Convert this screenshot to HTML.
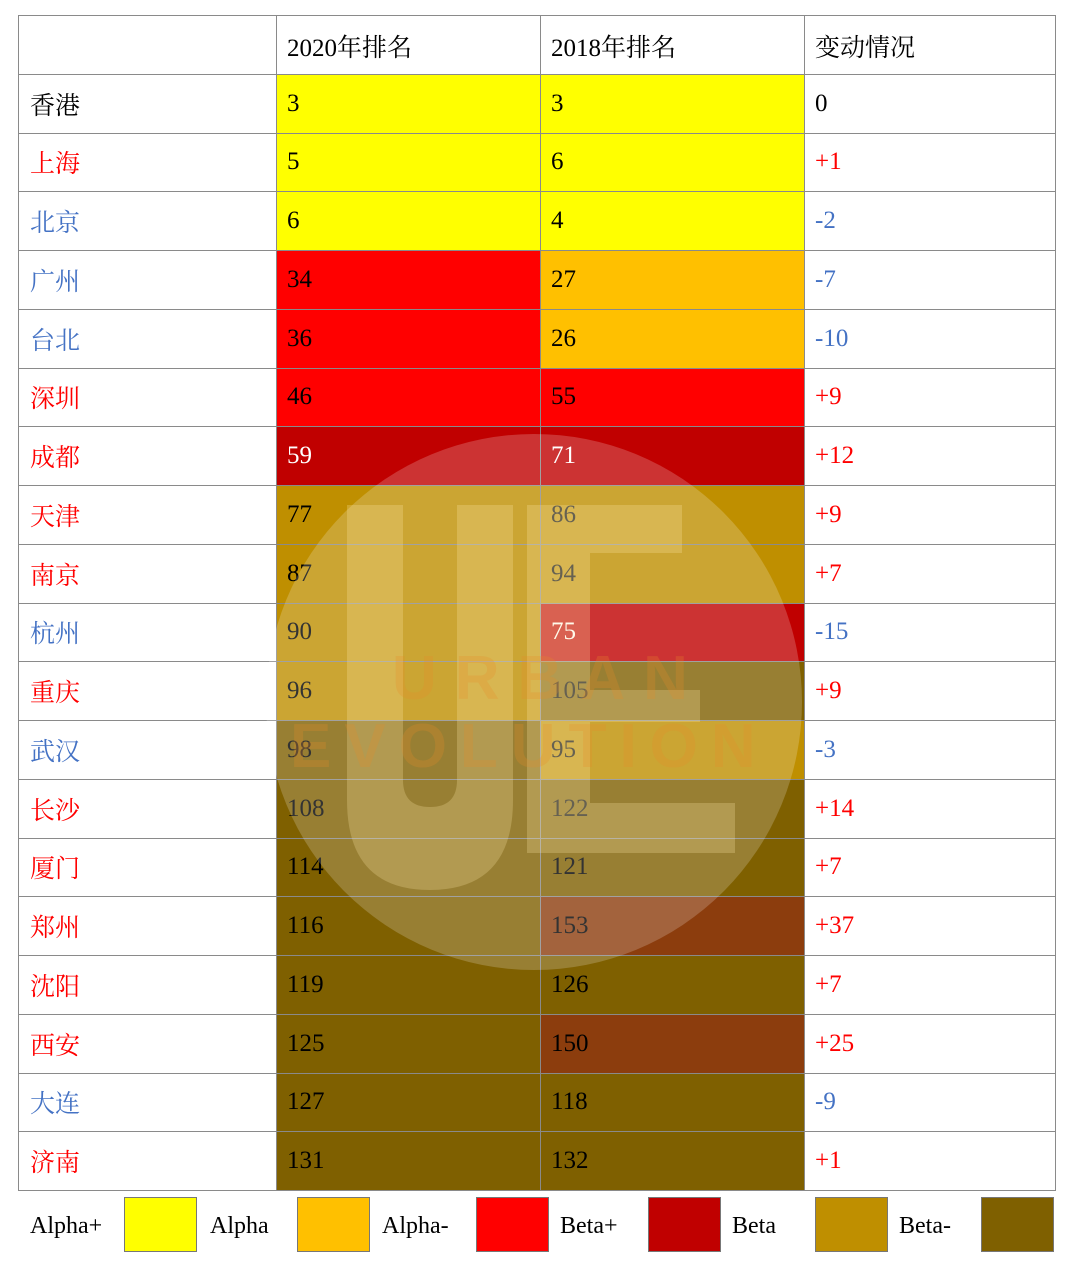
<!DOCTYPE html>
<html><head><meta charset="utf-8"><style>
body{margin:0;background:#fff;width:1068px;height:1286px;position:relative;overflow:hidden;font-family:"Liberation Serif","Noto Serif CJK SC",serif;}
table{position:absolute;left:18px;top:15px;border-collapse:collapse;table-layout:fixed;width:1037px;}
tr{height:58.75px}
td{border:1px solid #8a8a8a;height:57.75px;padding:0 0 0 10px;font-size:25px;color:#000;vertical-align:middle;line-height:24px;overflow:hidden;white-space:nowrap}
tr.h td span{position:relative;top:4px}
td.c{padding-left:11px;font-size:25px}
td.c span{position:relative;top:3px}
.r{color:#f00}.b{color:#4472c4}
.Y{background:#ffff00}.A{background:#ffc000}.R{background:#ff0000}.D{background:#c00000;color:#fff}.G{background:#bf8f00}.B{background:#7f6000}.X{background:#8c3d0d}
.lg{position:absolute;top:1197px;width:73px;height:55px;border:1px solid #777;box-sizing:border-box}
.lt{position:absolute;top:1212px;font-size:24px;line-height:28px}
.ue{position:absolute;font-family:"Liberation Sans",sans-serif;font-weight:bold;color:rgba(230,140,40,0.25);line-height:1}
</style></head><body>
<table>
<colgroup><col style="width:258px"><col style="width:264px"><col style="width:264px"><col style="width:251px"></colgroup>
<tr class="h"><td></td><td><span>2020年排名</span></td><td><span>2018年排名</span></td><td><span>变动情况</span></td></tr>
<tr><td class="c"><span>香港</span></td><td class="Y">3</td><td class="Y">3</td><td>0</td></tr>
<tr><td class="c r"><span>上海</span></td><td class="Y">5</td><td class="Y">6</td><td class="r">+1</td></tr>
<tr><td class="c b"><span>北京</span></td><td class="Y">6</td><td class="Y">4</td><td class="b">-2</td></tr>
<tr><td class="c b"><span>广州</span></td><td class="R">34</td><td class="A">27</td><td class="b">-7</td></tr>
<tr><td class="c b"><span>台北</span></td><td class="R">36</td><td class="A">26</td><td class="b">-10</td></tr>
<tr><td class="c r"><span>深圳</span></td><td class="R">46</td><td class="R">55</td><td class="r">+9</td></tr>
<tr><td class="c r"><span>成都</span></td><td class="D">59</td><td class="D">71</td><td class="r">+12</td></tr>
<tr><td class="c r"><span>天津</span></td><td class="G">77</td><td class="G">86</td><td class="r">+9</td></tr>
<tr><td class="c r"><span>南京</span></td><td class="G">87</td><td class="G">94</td><td class="r">+7</td></tr>
<tr><td class="c b"><span>杭州</span></td><td class="G">90</td><td class="D">75</td><td class="b">-15</td></tr>
<tr><td class="c r"><span>重庆</span></td><td class="G">96</td><td class="B">105</td><td class="r">+9</td></tr>
<tr><td class="c b"><span>武汉</span></td><td class="B">98</td><td class="G">95</td><td class="b">-3</td></tr>
<tr><td class="c r"><span>长沙</span></td><td class="B">108</td><td class="B">122</td><td class="r">+14</td></tr>
<tr><td class="c r"><span>厦门</span></td><td class="B">114</td><td class="B">121</td><td class="r">+7</td></tr>
<tr><td class="c r"><span>郑州</span></td><td class="B">116</td><td class="X">153</td><td class="r">+37</td></tr>
<tr><td class="c r"><span>沈阳</span></td><td class="B">119</td><td class="B">126</td><td class="r">+7</td></tr>
<tr><td class="c r"><span>西安</span></td><td class="B">125</td><td class="X">150</td><td class="r">+25</td></tr>
<tr><td class="c b"><span>大连</span></td><td class="B">127</td><td class="B">118</td><td class="b">-9</td></tr>
<tr><td class="c r"><span>济南</span></td><td class="B">131</td><td class="B">132</td><td class="r">+1</td></tr>
</table>
<svg style="position:absolute;left:0;top:0" width="1068" height="1286">
<circle cx="534" cy="702" r="268" fill="rgba(255,255,255,0.2)"/>
<g fill="rgba(255,235,170,0.25)">
<path d="M347 505 H403 V780 Q403 807 430 807 Q457 807 457 780 V505 H513 V800 Q513 890 430 890 Q347 890 347 800 Z"/>
<path d="M527 505 H682 V553 H590 V690 H700 V722 H590 V803 H735 V853 H527 Z"/>
</g>
</svg>
<div class="ue" style="left:392px;top:648px;font-size:62px;letter-spacing:18px">URBAN</div>
<div class="ue" style="left:290px;top:716px;font-size:62px;letter-spacing:13px">EVOLUTION</div>
<span class="lt" style="left:30px">Alpha+</span>
<div class="lg Y" style="left:124px"></div>
<span class="lt" style="left:210px">Alpha</span>
<div class="lg A" style="left:297px"></div>
<span class="lt" style="left:382px">Alpha-</span>
<div class="lg R" style="left:476px"></div>
<span class="lt" style="left:560px">Beta+</span>
<div class="lg" style="left:648px;background:#c00000"></div>
<span class="lt" style="left:732px">Beta</span>
<div class="lg G" style="left:815px"></div>
<span class="lt" style="left:899px">Beta-</span>
<div class="lg B" style="left:981px"></div>
</body></html>
